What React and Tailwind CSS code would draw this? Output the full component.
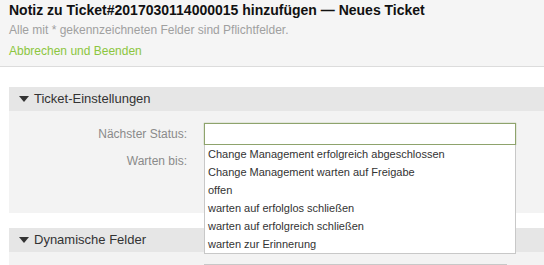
import React from 'react';

const statusOptions = [
    'Change Management erfolgreich abgeschlossen',
    'Change Management warten auf Freigabe',
    'offen',
    'warten auf erfolglos schließen',
    'warten auf erfolgreich schließen',
    'warten zur Erinnerung',
];

const Caret = () => (
    <svg width="10" height="6" viewBox="0 0 10 6" className="mr-[5px] shrink-0">
        <polygon points="0,0 10,0 5,6" fill="#333" />
    </svg>
);

const SectionHeader = ({ title }) => (
    <div className="h-[24px] bg-[#e6e6e6] flex items-center pl-[10px] text-[13px] text-[#333]">
        <Caret />
        <span>{title}</span>
    </div>
);

const App = () => {
    return (
        <div
            className="w-[544px] h-[265px] overflow-hidden bg-white"
            style={{ fontFamily: '"Liberation Sans", Arial, sans-serif' }}
        >
            <div className="h-[67px] bg-[#f5f5f5] border-b border-[#dcdcdc] pl-[9px] pt-[1px]">
                <h1 className="text-[14px] font-bold text-[#111] leading-[18px]">
                    Notiz zu Ticket#2017030114000015 hinzufügen — Neues Ticket
                </h1>
                <p className="text-[12px] text-[#a0a0a0] leading-[14px] mt-[4px]">
                    Alle mit * gekennzeichneten Felder sind Pflichtfelder.
                </p>
                <a className="block text-[12px] text-[#8cc63f] leading-[14px] mt-[7px]">
                    Abbrechen und Beenden
                </a>
            </div>

            <div className="pt-[20px] pl-[9px]">
                <SectionHeader title="Ticket-Einstellungen" />
                <div className="h-[102px] bg-[#f3f3f3] pt-[12px]">
                    <div className="flex items-center h-[22px]">
                        <label className="w-[178px] text-right text-[12px] text-[#8a8a8a]">Nächster Status:</label>
                        <div className="relative ml-[17px]">
                            <div className="w-[312px] h-[22px] bg-white border border-[#8ea36c] shadow-[0_0_1px_#8ea36c]" />
                            <ul className="absolute left-0 top-[22px] w-[312px] bg-white border border-[#c8c8c8] border-t-0 z-10">
                                {statusOptions.map((opt) => (
                                    <li key={opt} className="h-[18px] leading-[18px] pl-[3px] text-[11px] text-[#333]">
                                        {opt}
                                    </li>
                                ))}
                            </ul>
                        </div>
                    </div>
                    <div className="flex items-center h-[18px] mt-[7px]">
                        <label className="w-[178px] text-right text-[12px] text-[#8a8a8a]">Warten bis:</label>
                    </div>
                </div>

                <div className="h-[15px]" />
                <SectionHeader title="Dynamische Felder" />
                <div className="h-[40px] bg-[#f3f3f3] pt-[12px]">
                    <div className="ml-[195px] w-[303px] h-[22px] border border-[#c8c8c8] bg-white" />
                </div>
            </div>
        </div>
    );
};

export default App;
